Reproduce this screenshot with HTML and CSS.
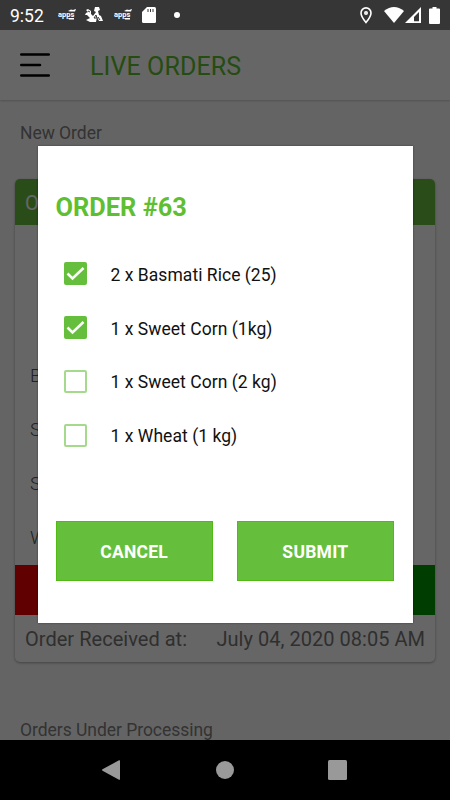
FILE: index.html
```html
<!DOCTYPE html>
<html lang="en">
<head>
<meta charset="utf-8">
<title>Live Orders</title>
<link rel="stylesheet" href="styles.css">
</head>
<body>
<div class="phone">
  <header class="status">
    <span class="clock">9:52</span>
    <svg class="appico" width="20" height="14" viewBox="0 0 20 14"><text x="0" y="9" class="apptext">apps</text><path d="M10 3l3-1.500 2 .5 3-1-1 2.500h-5zM10 10h6v1.500h-5z" /></svg>
    <svg class="rider" width="20" height="16" viewBox="0 0 20 16"><path d="M10 0h4l1 3-2 1 1 4 2 1 2 5h-4l-2-4-1 5H5l-4-2 4-2-3-3H0l1-2 2-1-2-2 2-1 3 2v3l2 2 3-4-2-1z"/><path class="cut" d="M9 11l2-3 1 3zM3 4l2 1M13 10l2 3"/></svg>
    <svg class="appico" width="20" height="14" viewBox="0 0 20 14"><text x="0" y="9" class="apptext">apps</text><path d="M10 3l3-1.500 2 .5 3-1-1 2.500h-5zM10 10h6v1.500h-5z" /></svg>
    <svg class="sd" width="14" height="16" viewBox="0 0 14 16"><path d="M5 0h7.500q1.500 0 1.500 1.500v13q0 1.500-1.500 1.500h-11Q0 16 0 14.500V5z"/><path class="cut" d="M6 2v3M8.500 2v3M11 2v3"/></svg>
    <i class="dot"></i>
    <svg class="pin" width="12" height="17" viewBox="0 0 12 17"><path d="M6 .9A5 5 0 0 0 1 6c0 3.500 5 9.600 5 9.600S11 9.500 11 6A5 5 0 0 0 6 .9z"/><circle cx="6" cy="6" r="1.200"/></svg>
    <svg class="wifi" width="20" height="16" viewBox="0 0 20 16"><path d="M0 4Q10-4 20 4L10 16z"/></svg>
    <svg class="signal" width="16" height="16" viewBox="0 0 16 16"><path d="M16 0v16H0z"/><path class="hole" d="M14 5v9.300H9V10z"/></svg>
    <svg class="battery" width="11" height="17" viewBox="0 0 11 17"><path d="M3.500 0h4v1.500H10q1 0 1 1V16q0 1-1 1H1q-1 0-1-1V2.500q0-1 1-1h2.500z"/></svg>
  </header>
  <main class="screen">
    <div class="appbar">
      <svg class="menu" width="30" height="26" viewBox="0 0 30 26"><path d="M1.250 2.500h27.500M1.250 13H20M1.250 23.500h27.500"/></svg>
      <h1>LIVE ORDERS</h1>
    </div>
    <h2 class="section">New Order</h2>
    <article class="card">
      <div class="card-head">O</div>
      <ul class="lines"><li>B</li><li>S</li><li>S</li><li>W</li></ul>
      <div class="choices"><span></span><span></span></div>
      <div class="received"><span class="label">Order Received at:</span><span class="date">July 04, 2020 08:05 AM</span></div>
    </article>
    <h2 class="section processing">Orders Under Processing</h2>
  </main>
  <nav class="navbar">
    <svg width="450" height="60" viewBox="0 0 450 60"><path d="M119 20.300q1-.5 1 .5v18.400q0 1-1 .5L102.500 30.700q-1-.7 0-1.400z"/><circle cx="225" cy="30" r="9"/><rect x="328" y="20" width="19" height="20" rx="1.500"/></svg>
  </nav>
  <div class="scrim"></div>
  <section class="dialog">
    <h3>ORDER #63</h3>
    <label class="item"><span class="box on"><svg width="23" height="23" viewBox="0 0 23 23"><path d="M3.500 11.500l5 5L19.500 6"/></svg></span><span class="name">2 x Basmati Rice (25)</span></label>
    <label class="item"><span class="box on"><svg width="23" height="23" viewBox="0 0 23 23"><path d="M3.500 11.500l5 5L19.500 6"/></svg></span><span class="name">1 x Sweet Corn (1kg)</span></label>
    <label class="item"><span class="box"></span><span class="name">1 x Sweet Corn (2 kg)</span></label>
    <label class="item"><span class="box"></span><span class="name">1 x Wheat (1 kg)</span></label>
    <div class="actions"><button>CANCEL</button><button>SUBMIT</button></div>
  </section>
</div>
</body>
</html>
```
FILE: styles.css
```css
* { box-sizing: border-box; }
body { margin: 0; font-family: Roboto, sans-serif; }
h1, h2, h3, ul { margin: 0; padding: 0; font-weight: 400; list-style: none; }
.phone { position: relative; width: 450px; height: 800px; overflow: hidden; display: flex; flex-direction: column; background: #fbfbfb; }
.status { height: 30px; background: #363636; color: #fff; display: flex; align-items: center; padding: 0 10px; flex: none; }
.status svg { fill: #fff; flex: none; }
.clock { width: 48px; font-size: 17.5px; line-height: 30px; padding-top: 1px; }
.apptext { font: 700 7.5px Roboto, sans-serif; }
.rider { margin: 0 9px 0 7px; }
.status .cut { fill: none; stroke: #363636; stroke-width: 1; }
.sd { margin-left: 8px; }
.dot { width: 6px; height: 6px; border-radius: 50%; background: #fff; margin-left: 18px; }
.status .pin { fill: none; stroke: #fff; stroke-width: 1.600; margin-left: auto; }
.wifi { margin-left: 12px; }
.signal { margin-left: 1px; }
.status .hole { fill: #363636; }
.battery { margin: 0 0 0 8px; }
.screen { height: 710px; flex: none; overflow: hidden; }
.appbar { height: 70px; display: flex; align-items: center; padding: 0 20px; gap: 40px; background: #fff; box-shadow: 0 1px 2px rgba(0,0,0,.2); }
.menu { fill: none; stroke: #000; stroke-width: 2.500; stroke-linecap: round; }
h1 { font-size: 25px; line-height: 32px; letter-spacing: .1px; color: #5cbd2c; padding-top: 4px; }
.section { font-size: 17.5px; line-height: 24px; letter-spacing: -.04px; color: #808080; margin: 21px 0 0 20px; }
.card { margin: 34px 15px 0; height: 483px; border-radius: 5px; background: #fff; overflow: hidden; box-shadow: 0 1px 3px rgba(0,0,0,.35); }
.card-head { height: 46px; line-height: 48px; padding-left: 10px; font-size: 20px; background: #66bf3c; color: #fff; }
.lines { padding: 124px 15px 0; height: 340px; font-size: 19px; font-weight: 300; line-height: 54px; color: #555; }
.choices { display: grid; grid-template-columns: 1fr 1fr; height: 50px; background: #f00000; }
.choices span + span { background: #009900; }
.received { display: flex; justify-content: space-between; padding: 0 10px; font-size: 20px; line-height: 49px; letter-spacing: .03px; color: #777; }
.processing { margin-top: 56px; }
.navbar { height: 60px; flex: none; background: #000; position: relative; z-index: 2; fill: #999; }
.navbar svg { display: block; }
.scrim { position: absolute; inset: 30px 0 60px; background: rgba(0,0,0,.6); }
.dialog { position: absolute; left: 37.500px; top: 146px; width: 375px; height: 477px; padding: 44px 18.500px 0 18px; background: #fff; box-shadow: 0 0 2px rgba(0,0,0,.4); }
h3 { font-size: 25.4px; font-weight: 700; line-height: 34px; color: #5fbf32; }
.item { display: flex; align-items: center; height: 53.8px; padding-left: 8px; }
h3 + .item { margin-top: 23px; }
.box { width: 23px; height: 23px; border: 2px solid #a5d98c; border-radius: 2px; }
.box.on { background: #66bf3c; border: 0; }
.box svg { display: block; fill: none; stroke: #fff; stroke-width: 2.500; }
.name { margin-left: 24px; font-size: 17.5px; line-height: 24px; letter-spacing: .04px; padding-top: 2px; color: #111; }
.actions { display: flex; gap: 24px; margin-top: 58.8px; }
button { flex: 1; height: 60px; border: 1px solid #52ba14; padding: 2px 0 0; background: #66bf3c; color: #fff; font: 700 17.5px Roboto, sans-serif; letter-spacing: .25px; }
```
